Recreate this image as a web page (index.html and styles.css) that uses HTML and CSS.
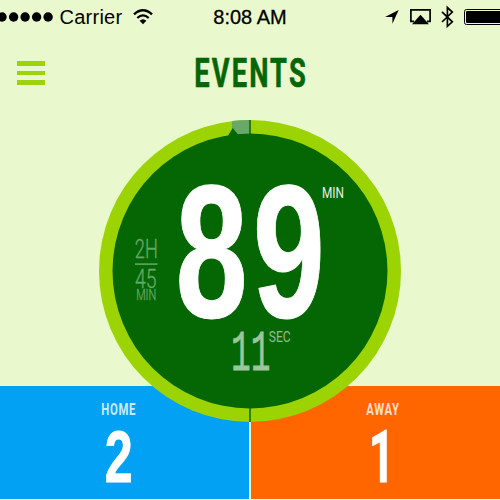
FILE: index.html
```
<!DOCTYPE html>
<html lang="en">
<head>
<meta charset="utf-8">
<title>Events</title>
<link rel="stylesheet" href="styles.css">
</head>
<body>
<main class="screen">
  <div class="status">
    <div class="carrier">
      <svg class="signal" width="53" height="12" viewBox="0 0 53 12"><circle cx="2" cy="6" r="4.7"/><circle cx="13.6" cy="6" r="4.7"/><circle cx="25.1" cy="6" r="4.7"/><circle cx="36.6" cy="6" r="4.7"/><circle cx="48.1" cy="6" r="4.7"/></svg>
      <span class="network">Carrier</span>
      <svg class="wifi" width="20" height="16" viewBox="0 0 20 16"><path class="arc" d="M1 5.4Q10-2.8 19 5.4M4.3 9Q10 3.7 15.7 9"/><path d="M6.6 11.7Q10 8.7 13.4 11.7L10 15.2Z"/></svg>
    </div>
    <span class="time">8:08 AM</span>
    <div class="indicators">
      <svg width="14" height="14" viewBox="0 0 14 14"><path d="M13.7 0L7.4 13.7V7H0Z"/></svg>
      <svg width="21" height="16" viewBox="0 0 21 16"><path class="line" d="M4 12.3H.9V.9H20.1V12.3H17"/><path d="M10.5 5.7L19 15.2H2Z"/></svg>
      <svg width="13" height="22" viewBox="0 0 13 22"><path class="line" d="M1 5.8L11.3 15.8L6.4 20.3V1.5L11.3 6L1 16"/></svg>
      <svg width="36" height="16" viewBox="0 0 36 16"><rect class="case" x=".5" y=".5" width="45" height="15" rx="2"/><rect x="2" y="2" width="40" height="12" rx="1"/></svg>
    </div>
  </div>
  <header class="header">
    <button class="menu" aria-label="Menu"><i></i><i></i><i></i></button>
    <svg class="title" width="120" height="40" viewBox="0 0 120 40"><text class="bold heading" x="4.3" y="34.3" font-size="41.5" textLength="113.5" lengthAdjust="spacingAndGlyphs">EVENTS</text></svg>
  </header>
  <section class="score">
    <div class="team home">
      <svg width="60" height="110" viewBox="0 0 60 110"><text class="bold label" x="13.3" y="29.2" font-size="17" textLength="34.8" lengthAdjust="spacingAndGlyphs">HOME</text><text class="numeral goals" x="16.7" y="96.3" font-size="73" textLength="28" lengthAdjust="spacingAndGlyphs">2</text></svg>
    </div>
    <div class="team away">
      <svg width="60" height="110" viewBox="0 0 60 110"><text class="bold label" x="14.2" y="29.2" font-size="17" textLength="33.5" lengthAdjust="spacingAndGlyphs">AWAY</text><text class="bold goals" x="16.8" y="96.3" font-size="72" textLength="26" lengthAdjust="spacingAndGlyphs">1</text></svg>
    </div>
  </section>
  <svg class="dial" width="304" height="304" viewBox="98 118.5 304 304">
    <circle class="ring" cx="250" cy="270.5" r="151"/>
    <path class="elapsed" d="M232 120.6Q241 119.4 250 119.5V136H232Z"/>
    <path class="tick" d="M250 119.5V136M250 405V421.5"/>
    <circle class="face" cx="250" cy="270.5" r="137.5"/>
    <path class="face" d="M227.5 136L232.7 127.4L239 135V137Z"/>
    <text class="numeral minutes" x="175.6" y="316" font-size="189" textLength="154.5" lengthAdjust="spacingAndGlyphs">89</text>
    <text class="unit" x="322" y="197" font-size="15" textLength="22" lengthAdjust="spacingAndGlyphs">MIN</text>
    <g class="total">
      <text x="134.8" y="257.3" font-size="25" textLength="23" lengthAdjust="spacingAndGlyphs">2H</text>
      <path d="M135 263.6H157.5"/>
      <text x="135" y="287.3" font-size="25" textLength="21.5" lengthAdjust="spacingAndGlyphs">45</text>
      <text x="136.2" y="299.5" font-size="14" textLength="20" lengthAdjust="spacingAndGlyphs">MIN</text>
    </g>
    <text class="seconds" x="231" y="369.3" font-size="58" textLength="39.5" lengthAdjust="spacingAndGlyphs">11</text>
    <text class="unit sec" x="268.7" y="341" font-size="15.5" textLength="22" lengthAdjust="spacingAndGlyphs">SEC</text>
  </svg>
</main>
</body>
</html>
```
FILE: styles.css
```
* { box-sizing: border-box; }
body { margin: 0; }
svg { display: block; flex: none; overflow: visible; }

.screen {
  position: relative;
  display: flex;
  flex-direction: column;
  width: 500px;
  height: 500px;
  overflow: hidden;
  background: #eaf8cd;
}

.status {
  display: grid;
  grid-template-columns: 200px 100px 200px;
  height: 34px;
  align-items: center;
  font: 20px/34px "Liberation Sans", sans-serif;
  color: #000;
}
.carrier { display: flex; align-items: center; }
.network { margin-left: 6.5px; width: 73.5px; letter-spacing: .25px; }
.time { text-align: center; -webkit-text-stroke: .3px #000; white-space: nowrap; }
.indicators { display: flex; align-items: center; justify-content: flex-end; }
.indicators svg:nth-child(2) { margin-left: 11px; }
.indicators svg:nth-child(3) { margin-left: 10px; }
.indicators svg:nth-child(4) { margin-left: 10px; }
.arc { fill: none; stroke: #000; stroke-width: 2.3; }
.line { fill: none; stroke: #000; stroke-width: 1.7; }
.case { fill: none; stroke: #000; stroke-width: 1; }

.header {
  display: grid;
  grid-template-columns: 190px 120px;
  align-items: center;
  height: 78px;
}
.menu {
  display: flex;
  flex-direction: column;
  gap: 5px;
  width: 28px;
  margin-left: 17px;
  padding: 0;
  border: 0;
  background: none;
}
.menu i { height: 4.7px; background: #9dd30a; }
.title { fill: #046604; }
.bold { font-family: Roboto, sans-serif; font-weight: 700; }
.heading { letter-spacing: 3.2px; stroke: #046604; stroke-width: .6; }
.numeral { font-family: "Liberation Sans", sans-serif; font-weight: 700; }

.score {
  display: grid;
  grid-template-columns: 249px 249.5px;
  gap: 1.5px;
  height: 114.5px;
  margin-top: auto;
  padding-bottom: 1px;
}
.team { fill: #fff; }
.home { background: #02a1f3; }
.away { background: #ff6600; }
.home svg { margin-left: 88px; }
.away svg { margin-left: 101px; }
.label { fill: rgba(255, 255, 255, .8); letter-spacing: 1px; }
.goals { stroke: #fff; stroke-width: .8; }

.dial { position: absolute; left: 98px; top: 118.5px; }
.ring { fill: #9cd303; }
.face { fill: #046704; }
.elapsed { fill: #68a968; }
.tick { fill: none; stroke: #046704; stroke-width: 1.5; }
.minutes { fill: #fff; stroke: #fff; stroke-width: 1; letter-spacing: 7.4px; }
.unit { font-family: Roboto, sans-serif; fill: #e6f0e6; }
.sec { fill: #8fbf8f; }
.total { font-family: Roboto, sans-serif; font-weight: 300; fill: #68a968; stroke: #68a968; stroke-width: .3; }
.total path { stroke-width: 1.5; }
.seconds { font-family: "Liberation Mono", monospace; fill: #9bc59b; stroke: #9bc59b; stroke-width: .8; }
```
